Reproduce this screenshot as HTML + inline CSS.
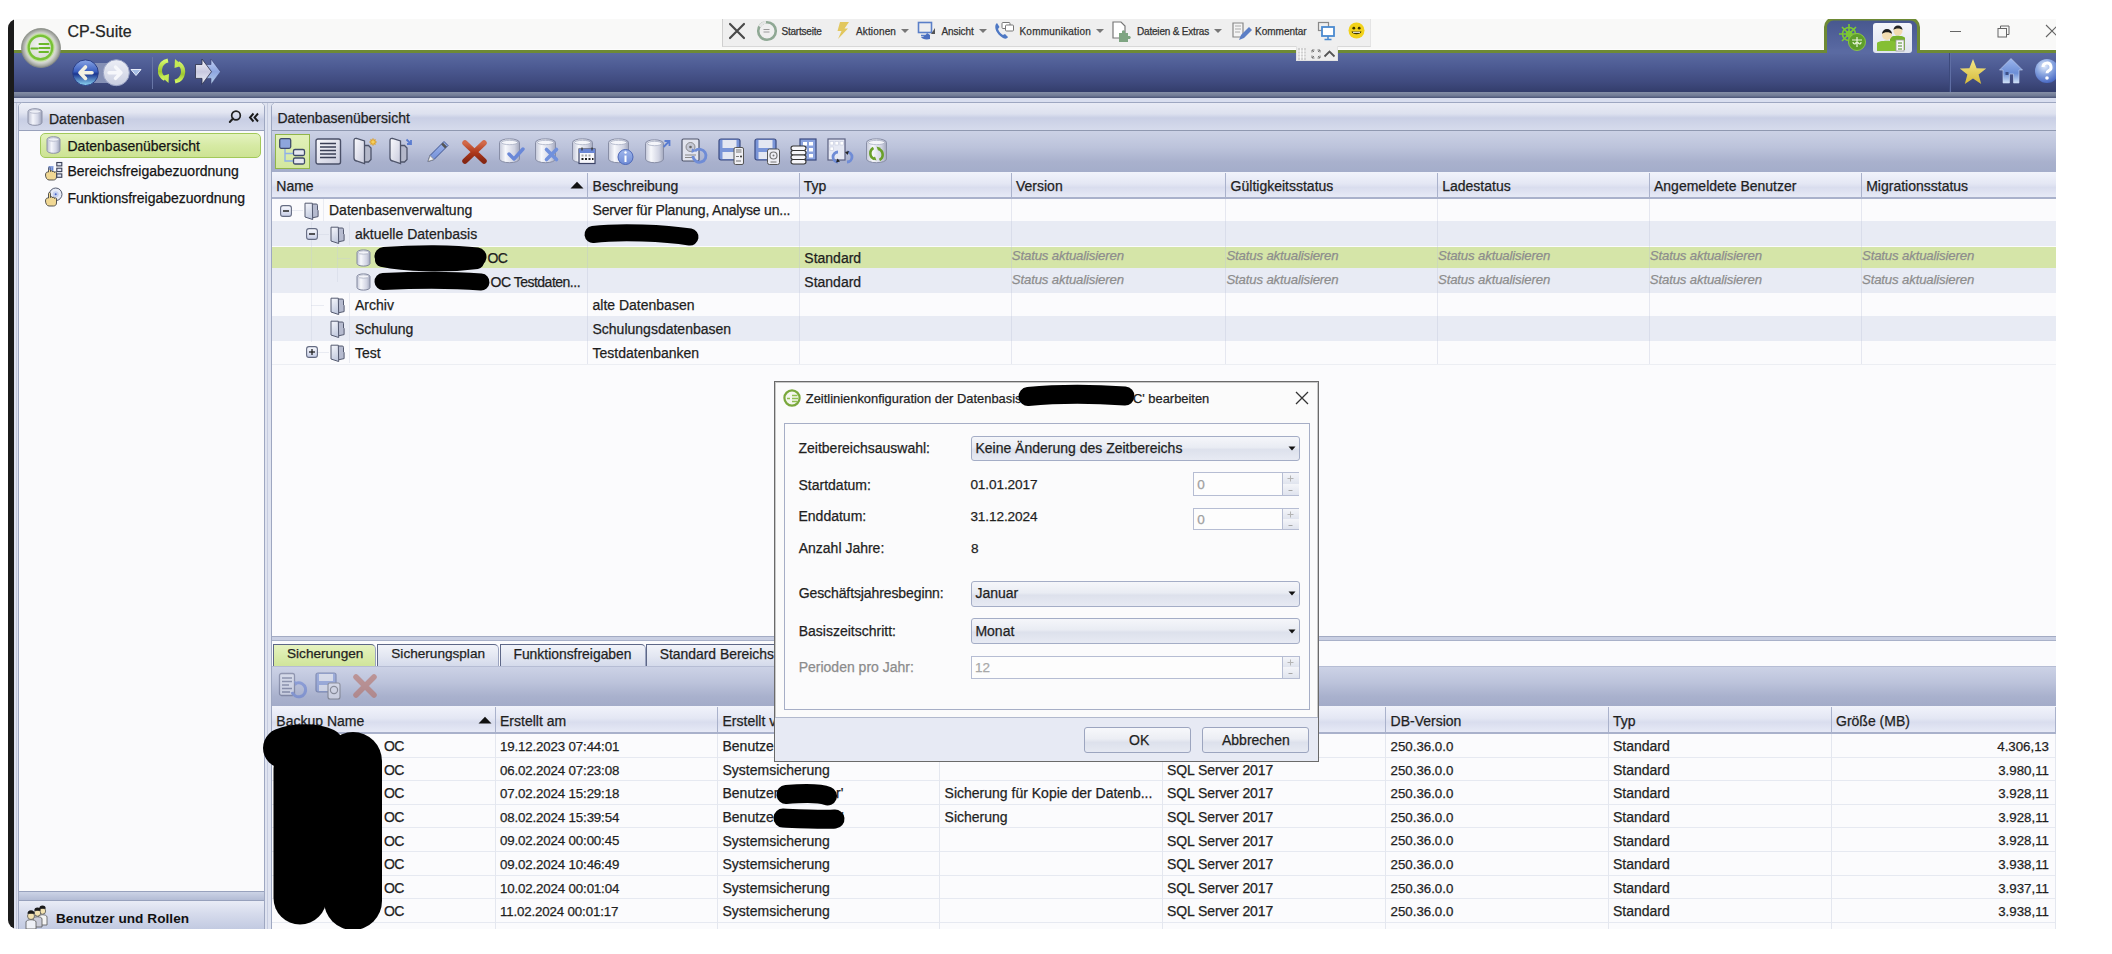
<!DOCTYPE html>
<html><head><meta charset="utf-8">
<style>
*{box-sizing:border-box;margin:0;padding:0}
html,body{width:2112px;height:954px;overflow:hidden;background:#fff;font-family:"Liberation Sans",sans-serif;color:#1e1e1e}
.a{position:absolute;display:block}
.t{position:absolute;white-space:nowrap;font-size:14px;line-height:16px;-webkit-text-stroke:0.25px currentColor}
#win{position:absolute;left:0;top:0;width:2056px;height:929px;overflow:hidden;clip-path:inset(19px 0 0 8px round 9px 0 0 9px)}
</style></head><body>
<div id="win">
<div class="a" style="left:8px;top:19px;width:6px;height:910px;background:#1b1b1b"></div>
<div class="a" style="left:14px;top:19px;width:2042px;height:31px;background:#f9f9f8"></div>
<div class="a" style="left:14px;top:49px;width:2042px;height:1px;background:#fdfdfd"></div>
<div class="a" style="left:14px;top:50px;width:2042px;height:3px;background:#6e8a35"></div>
<div class="a" style="left:14px;top:53px;width:2042px;height:39px;background:linear-gradient(#5a6aa1,#4d5b93 35%,#3f4a7e 75%,#333d6b)"></div>
<div class="a" style="left:14px;top:92px;width:2042px;height:6px;background:linear-gradient(#858fa7,#717b95 60%,#4b5578)"></div>
<div class="a" style="left:14px;top:98px;width:2042px;height:831px;background:#e1e5f2"></div>
<div class="a" style="left:14px;top:98px;width:2042px;height:4px;background:#d9deef"></div>
<div class="a" style="left:14px;top:102px;width:2042px;height:1px;background:#a4acc4"></div>
<svg class="a" style="left:20px;top:27px;" width="42" height="42" viewBox="0 0 42 42">
<defs>
<radialGradient id="lg1" cx="50%" cy="50%" r="50%"><stop offset="0.6" stop-color="#f0f1ee"/><stop offset="0.8" stop-color="#c9ccc6"/><stop offset="1" stop-color="#8c9089"/></radialGradient>
<radialGradient id="lg2" cx="45%" cy="40%" r="60%"><stop offset="0" stop-color="#f4f4f4"/><stop offset="1" stop-color="#d8dbd4"/></radialGradient>
</defs>
<circle cx="21" cy="21" r="19.5" fill="url(#lg1)" stroke="#8a8e87" stroke-width="0.8"/>
<circle cx="20.5" cy="20.5" r="13.5" fill="none" stroke="#c0e09a" stroke-width="1.5"/>
<circle cx="20.5" cy="20.5" r="11.8" fill="url(#lg2)" stroke="#78c236" stroke-width="2.4"/>
<path d="M11.5 21.5h6M19.5 17h9M19.5 21h10M19.5 25h8.5" stroke="#6ab82a" stroke-width="2.1" stroke-linecap="round"/>
</svg>
<div class="t" style="left:67.5px;top:21.96px;font-size:16px;line-height:19px;color:#252525;">CP-Suite</div>
<svg class="a" style="left:70px;top:58px;" width="75" height="30" viewBox="0 0 75 30">
<defs>
<linearGradient id="bk" x1="0" y1="0" x2="0" y2="1"><stop offset="0" stop-color="#8aa6e6"/><stop offset="0.45" stop-color="#3b5fc0"/><stop offset="0.55" stop-color="#1a3590"/><stop offset="1" stop-color="#8fd8f4"/></linearGradient>
<linearGradient id="fw" x1="0" y1="0" x2="0" y2="1"><stop offset="0" stop-color="#eceef6"/><stop offset="1" stop-color="#c9cee0"/></linearGradient>
</defs>
<rect x="22" y="5" width="30" height="20" fill="#8590b5"/>
<circle cx="46.3" cy="14.7" r="13" fill="url(#fw)" stroke="#9aa3c4" stroke-width="1"/>
<path d="M39 14.7h12M45.5 9l5.5 5.7-5.5 5.7" stroke="#f6f7fb" stroke-width="3.4" fill="none" stroke-linecap="round" stroke-linejoin="round"/>
<circle cx="15.5" cy="14.7" r="12.8" fill="url(#bk)" stroke="#2b3f86" stroke-width="1"/>
<path d="M22 14.7H10M15.5 9L10 14.7l5.5 5.7" stroke="#f2f0e2" stroke-width="3.6" fill="none" stroke-linecap="round" stroke-linejoin="round"/>
<path d="M61 11.5h10l-5 6z" fill="#a6bde4" stroke="#e8eefa" stroke-width="1"/>
</svg>
<div class="a" style="left:152px;top:57px;width:1px;height:32px;background:#6876a6"></div>
<svg class="a" style="left:158px;top:57px;" width="28" height="28" viewBox="0 0 28 28">
<defs><linearGradient id="rf" x1="0" y1="0" x2="0" y2="1"><stop offset="0" stop-color="#d6f86e"/><stop offset="0.6" stop-color="#9cc630"/><stop offset="1" stop-color="#d0f560"/></linearGradient></defs>
<path d="M10 3.5A10 10 0 0 0 7 22" stroke="url(#rf)" stroke-width="4.2" fill="none"/>
<path d="M3 19.5l7.5 6.5 0.5-9z" fill="#c4ea55"/>
<path d="M17 24.5A10 10 0 0 0 20 6" stroke="url(#rf)" stroke-width="4.2" fill="none"/>
<path d="M24.5 8.5l-7.5-6.5-0.5 9z" fill="#c4ea55"/>
</svg>
<svg class="a" style="left:194px;top:57px;" width="28" height="28" viewBox="0 0 28 28">
<defs><linearGradient id="da1" x1="0" y1="0" x2="0" y2="1"><stop offset="0" stop-color="#f6f6fb"/><stop offset="0.5" stop-color="#c8c9e0"/><stop offset="1" stop-color="#eef2fa"/></linearGradient>
<linearGradient id="da2" x1="0" y1="0" x2="0" y2="1"><stop offset="0" stop-color="#c2d0f4"/><stop offset="0.5" stop-color="#8ea6e0"/><stop offset="1" stop-color="#b8d2ee"/></linearGradient></defs>
<path d="M10.5 7.5H17V2l9.5 12.7L17 27.4v-6H10.5z" fill="url(#da2)" stroke="#3a4270" stroke-width="0.6"/>
<path d="M1.5 7.5H8V2l9.5 12.7L8 27.4v-6H1.5z" fill="url(#da1)" stroke="#2a2f48" stroke-width="0.8"/>
</svg>
<div class="a" style="left:722px;top:19px;width:649px;height:28px;background:#efefef;border-left:1px solid #cfcfcf;border-bottom:1px solid #d8d8d8;border-right:1px solid #e4e4e4"></div>
<div class="a" style="left:1296px;top:46px;width:42px;height:15px;background:#eeeeee;border:1px solid #e2e2e2;border-top:none"></div>
<svg class="a" style="left:728px;top:22px;" width="18" height="18" viewBox="0 0 18 18"><path d="M2 2L16 16M16 2L2 16" stroke="#4a4a4a" stroke-width="2.2" stroke-linecap="round"/></svg>
<svg class="a" style="left:756px;top:20px;" width="22" height="22" viewBox="0 0 22 22"><circle cx="11" cy="11" r="8.8" fill="none" stroke="#8fa894" stroke-width="2.6"/><path d="M3.5 6.5A9 9 0 0 1 10 2.2" stroke="#e6e6e6" stroke-width="2.8" fill="none"/><path d="M7.5 9.5h6M7.5 12h6" stroke="#9a9a9a" stroke-width="1"/></svg>
<div class="t" style="left:781.5px;top:25.74px;font-size:10px;line-height:12px;color:#333;letter-spacing:-0.22px;">Startseite</div>
<svg class="a" style="left:835px;top:21px;" width="15" height="19" viewBox="0 0 15 19"><path d="M5 1h9L9.5 7.5H13L3 18l3.5-8H2.5z" fill="#e2c75e"/></svg>
<div class="t" style="left:856px;top:25.74px;font-size:10px;line-height:12px;color:#333;letter-spacing:0.14px;">Aktionen</div>
<svg class="a" style="left:900px;top:28px;" width="10" height="6" viewBox="0 0 10 6"><path d="M1 1h8L5 5z" fill="#777"/></svg>
<svg class="a" style="left:917px;top:21px;" width="20" height="20" viewBox="0 0 20 20"><rect x="1.5" y="1.5" width="13" height="10" fill="none" stroke="#5a7fc8" stroke-width="1.6"/><path d="M4 14.5h8" stroke="#5a7fc8" stroke-width="1.6"/><path d="M13 18c-4 1-8 0-9-2 3 0 5-2 6-4l3 2z" fill="#4b6fbf"/><path d="M14 13l4-6v6z" fill="#555"/></svg>
<div class="t" style="left:941.5px;top:25.74px;font-size:10px;line-height:12px;color:#333;letter-spacing:-0.1px;">Ansicht</div>
<svg class="a" style="left:978px;top:28px;" width="10" height="6" viewBox="0 0 10 6"><path d="M1 1h8L5 5z" fill="#777"/></svg>
<svg class="a" style="left:993px;top:20px;" width="22" height="22" viewBox="0 0 22 22"><path d="M3 4c-2 3 0 10 7 14 2 1 4 1 5-1l-3-3-2 1c-2-1-4-3-5-6l1.5-2L4 3z" fill="#4e78c4"/><rect x="9" y="2.5" width="8" height="6" rx="1" fill="#fff" stroke="#777" stroke-width="1"/><rect x="12.5" y="5" width="8" height="6" rx="1" fill="#fff" stroke="#777" stroke-width="1"/></svg>
<div class="t" style="left:1019.5px;top:25.74px;font-size:10px;line-height:12px;color:#333;letter-spacing:0.2px;">Kommunikation</div>
<svg class="a" style="left:1095px;top:28px;" width="10" height="6" viewBox="0 0 10 6"><path d="M1 1h8L5 5z" fill="#777"/></svg>
<svg class="a" style="left:1111px;top:21px;" width="22" height="22" viewBox="0 0 22 22"><path d="M2 1h8l4 4v12H2z" fill="#fff" stroke="#777" stroke-width="1.2"/><path d="M8 12h3v-2a2 2 0 0 1 3 0v2h3v3h2a2 2 0 0 1 0 3h-2v3H8z" fill="#7fa582"/></svg>
<div class="t" style="left:1137px;top:25.74px;font-size:10px;line-height:12px;color:#333;letter-spacing:-0.19px;">Dateien &amp; Extras</div>
<svg class="a" style="left:1213px;top:28px;" width="10" height="6" viewBox="0 0 10 6"><path d="M1 1h8L5 5z" fill="#777"/></svg>
<svg class="a" style="left:1231px;top:21px;" width="21" height="21" viewBox="0 0 21 21"><path d="M2 2h10v14H2z" fill="#f4f4f4" stroke="#888" stroke-width="1.2"/><path d="M4 5h6M4 8h6M4 11h5" stroke="#aaa" stroke-width="1"/><path d="M8 19l2-5 8-8 3 3-8 8z" fill="#5c7fc6"/></svg>
<div class="t" style="left:1255px;top:25.74px;font-size:10px;line-height:12px;color:#333;letter-spacing:0px;">Kommentar</div>
<svg class="a" style="left:1317px;top:21px;" width="20" height="21" viewBox="0 0 20 21"><rect x="1.5" y="1.5" width="10" height="8" fill="none" stroke="#888" stroke-width="1.2"/><rect x="5" y="6" width="12" height="9" fill="#fff" stroke="#4a8ad0" stroke-width="1.8"/><path d="M11 15v3M7.5 18.5h7" stroke="#4a8ad0" stroke-width="1.6"/></svg>
<svg class="a" style="left:1348px;top:22px;" width="17" height="17" viewBox="0 0 17 17"><circle cx="8.5" cy="8.5" r="8" fill="#f2d21a"/><circle cx="5.8" cy="6.2" r="1.4" fill="#3b3300"/><circle cx="11.2" cy="6.2" r="1.4" fill="#3b3300"/><path d="M3.5 9.5c1 3.5 9 3.5 10 0z" fill="#3b3300"/><path d="M5 10.3h7" stroke="#fff" stroke-width="1"/></svg>
<svg class="a" style="left:1297px;top:47px;" width="40" height="14" viewBox="0 0 40 14"><g fill="#d2d2d2"><rect x="1" y="1" width="8" height="12"/></g><path d="M1 4h8M1 7h8M1 10h8M3.5 1v12M6.5 1v12" stroke="#fff" stroke-width="0.8"/><path d="M15 3l2 2M15 3h2.5M15 3v2.5M23 3l-2 2M23 3h-2.5M23 3v2.5M15 11l2-2M15 11h2.5M15 11v-2.5M23 11l-2-2M23 11h-2.5M23 11v-2.5" stroke="#777" stroke-width="1"/><path d="M27.5 9.5l5-5 5 5" stroke="#555" stroke-width="1.8" fill="none"/></svg>
<svg class="a" style="left:1822px;top:17px;" width="100" height="37" viewBox="0 0 100 37">
<defs><linearGradient id="tb" x1="0" y1="0" x2="0" y2="1"><stop offset="0" stop-color="#47578e"/><stop offset="1" stop-color="#5a6aa3"/></linearGradient></defs>
<path d="M0 34.5H3.5V10a8 8 0 0 1 8-8H88.5a8 8 0 0 1 8 8V34.5H100" fill="url(#tb)" stroke="#6e8a35" stroke-width="3"/>
</svg>
<div class="a" style="left:1827px;top:49px;width:90px;height:5px;background:#5a6aa2"></div>
<div class="a" style="left:1873px;top:23px;width:39px;height:30px;background:linear-gradient(#f4f5fa,#dfe3ef);border-radius:3px"></div>
<svg class="a" style="left:1838px;top:23px;" width="28" height="28" viewBox="0 0 28 28">
<g stroke="#7cc832" stroke-width="1.6" fill="none"><circle cx="11" cy="11" r="6.5"/><circle cx="11" cy="11" r="2.5"/>
<path d="M11 1v20M1 11h20M4 4l14 14M18 4L4 18"/></g>
<circle cx="19" cy="19" r="8.5" fill="#5e9e2a" stroke="#8bc448" stroke-width="1"/>
<path d="M14 17h10M19 14v10M15 19c0 2 3 3 3 0M20 19c0 2 3 3 3 0" stroke="#e8f4d8" stroke-width="1.2" fill="none"/>
</svg>
<svg class="a" style="left:1875px;top:24px;" width="34" height="28" viewBox="0 0 34 28">
<circle cx="23" cy="7" r="4.5" fill="#f2dcb0"/><path d="M18.5 6a4.5 4.5 0 0 1 9 0c-2-2-7-2-9 0z" fill="#222"/>
<path d="M15 14c1-3 14-3 15 0v12H15z" fill="#76b22c"/>
<circle cx="12" cy="11" r="5" fill="#f3ddb2"/><path d="M7 10a5 5 0 0 1 10 0c-2-2.5-8-2.5-10 0z" fill="#1d1d1d"/>
<path d="M2 19c1-3 19-3 20 0v8H2z" fill="#84bf34"/>
<rect x="21" y="16" width="8" height="11" fill="#f7f7f7" stroke="#999" stroke-width="0.8"/>
<path d="M23 19h4M23 22h4M23 25h4" stroke="#4b8a26" stroke-width="1"/>
</svg>
<div class="a" style="left:1950px;top:31px;width:11px;height:1.2px;background:#666"></div>
<svg class="a" style="left:1997px;top:25px;" width="13" height="13" viewBox="0 0 13 13"><rect x="1" y="3.5" width="8.5" height="8.5" fill="none" stroke="#666" stroke-width="1"/><path d="M3.5 3.5V1h8.5v8.5H9.5" fill="none" stroke="#666" stroke-width="1"/></svg>
<svg class="a" style="left:2045px;top:24px;" width="14" height="14" viewBox="0 0 14 14"><path d="M1 1L13 13M13 1L1 13" stroke="#666" stroke-width="1.1"/></svg>
<div class="a" style="left:1949px;top:53px;width:1px;height:39px;background:#3d4a7c;box-shadow:1px 0 0 #5f6ea4"></div>
<svg class="a" style="left:1959px;top:58px;" width="28" height="27" viewBox="0 0 28 27">
<defs><linearGradient id="st" x1="0" y1="0" x2="0" y2="1"><stop offset="0" stop-color="#f4e78a"/><stop offset="1" stop-color="#d6bb3a"/></linearGradient></defs>
<path d="M14 1l3.6 9.2 9.6 0.4-7.6 6 2.6 9.4L14 20.6 5.8 26l2.6-9.4-7.6-6 9.6-0.4z" fill="url(#st)"/>
</svg>
<svg class="a" style="left:1998px;top:57px;" width="26" height="27" viewBox="0 0 26 27">
<defs><linearGradient id="hs" x1="0" y1="0" x2="0" y2="1"><stop offset="0" stop-color="#9cb6ee"/><stop offset="0.6" stop-color="#6c8ed6"/><stop offset="1" stop-color="#cfe2f8"/></linearGradient></defs>
<path d="M13 1.5L24.5 13H21v13h-5.5v-9h-4v9H5V13H1.5z" fill="url(#hs)" stroke="#c9d6f2" stroke-width="0.6"/>
<rect x="7.5" y="15" width="3" height="3" fill="#3c4f86"/>
</svg>
<svg class="a" style="left:2034px;top:58px;" width="26" height="26" viewBox="0 0 26 26">
<defs><radialGradient id="hp" cx="40%" cy="30%" r="70%"><stop offset="0" stop-color="#e2ecfc"/><stop offset="0.5" stop-color="#8aa6e0"/><stop offset="1" stop-color="#4a6ac4"/></radialGradient></defs>
<circle cx="13" cy="13" r="12" fill="url(#hp)"/>
<path d="M9 9a4 4 0 1 1 5.5 3.8c-1 .5-1.5 1-1.5 2.5" stroke="#fff" stroke-width="3" fill="none"/><circle cx="13" cy="20" r="1.8" fill="#fff"/>
</svg>
<svg width="0" height="0" style="position:absolute"><defs><linearGradient id="cyl" x1="0" y1="0" x2="1" y2="0"><stop offset="0" stop-color="#b9bdd0"/><stop offset="0.35" stop-color="#f4f5fb"/><stop offset="0.7" stop-color="#d3d6e6"/><stop offset="1" stop-color="#9aa0b8"/></linearGradient></defs></svg>
<div class="a" style="left:14px;top:103px;width:4px;height:826px;background:#dde1ef"></div>
<div class="a" style="left:16px;top:103px;width:1px;height:826px;background:#c3c9dd"></div>
<div class="a" style="left:18px;top:102px;width:247px;height:830px;border:1px solid #9ea7c1;border-radius:5px 5px 0 0;background:#fafafc"></div>
<div class="a" style="left:19px;top:103px;width:245px;height:28px;border-radius:4px 4px 0 0;background:linear-gradient(#eef0f8,#e2e5f1 35%,#c8cee4 60%,#d3d8ea);border-bottom:1px solid #98a1bb"></div>
<svg class="a" style="left:27px;top:108px;" width="16" height="18" viewBox="0 0 16 18"><path d="M1 3.5A7.0 2.8 0 0 1 15 3.5V14.5A7.0 2.8 0 0 1 1 14.5z" fill="url(#cyl)" stroke="#8d92a8" stroke-width="1"/><ellipse cx="8.0" cy="3.5" rx="5.8" ry="1.8" fill="#eceef6" stroke="#a9aec2" stroke-width="0.7"/></svg>
<div class="t" style="left:49px;top:110.65px;font-size:14px;line-height:17px;color:#1f1f1f;">Datenbasen</div>
<svg class="a" style="left:227px;top:109px;" width="34" height="16" viewBox="0 0 34 16"><circle cx="9" cy="6.5" r="4.3" fill="none" stroke="#222" stroke-width="1.7"/><path d="M6 9.5L2.8 13" stroke="#222" stroke-width="2" stroke-linecap="round"/><path d="M26.5 4.5L23 8.5l3.5 4M31 4.5L27.5 8.5l3.5 4" stroke="#1a1a1a" stroke-width="1.9" fill="none"/></svg>
<div class="a" style="left:40px;top:133px;width:221px;height:25px;border:1px solid #a2c95a;border-radius:5px;background:linear-gradient(#e4f2c0,#d6eaa4 50%,#cde394)"></div>
<svg class="a" style="left:46px;top:136px;" width="15" height="18" viewBox="0 0 15 18"><path d="M1 3.5A6.5 2.8 0 0 1 14 3.5V14.5A6.5 2.8 0 0 1 1 14.5z" fill="url(#cyl)" stroke="#8d92a8" stroke-width="1"/><ellipse cx="7.5" cy="3.5" rx="5.3" ry="1.8" fill="#eceef6" stroke="#a9aec2" stroke-width="0.7"/></svg>
<div class="t" style="left:67.5px;top:138.15px;font-size:14px;line-height:17px;color:#141414;">Datenbasenübersicht</div>
<svg class="a" style="left:43px;top:161px;" width="22" height="20" viewBox="0 0 22 20"><path d="M9.5 6.5v6M12 17.5v-5" stroke="#7fa0e0" stroke-width="1" fill="none"/>
<path d="M2.5 14c0-2 1-3 2-3l1 0V7c0-1.3 2-1.3 2 0v3.5c0-1 2-1 2 0v0.5c0-1 2-1 2 0v0.5c0-.8 2-.8 2 0V16c0 2-1.5 3-3 3H6c-2 0-3.5-2.5-3.5-5z" fill="#f1d894" stroke="#444" stroke-width="0.9"/>
<rect x="5.5" y="5" width="5" height="4" fill="#5d7ed0" opacity="0.7"/>
<g fill="#dfe4f2" stroke="#3b4058" stroke-width="1.1"><rect x="13.8" y="1.5" width="5" height="3.4"/><rect x="13.8" y="7.2" width="5" height="3.4"/><rect x="13.8" y="12.9" width="5" height="3.4"/></g></svg>
<div class="t" style="left:67.5px;top:163.15px;font-size:14px;line-height:17px;color:#141414;">Bereichsfreigabezuordnung</div>
<svg class="a" style="left:43px;top:186px;" width="22" height="21" viewBox="0 0 22 21"><circle cx="12.7" cy="8.3" r="6.3" fill="#e6eaf6" stroke="#555c70" stroke-width="1"/><circle cx="12.7" cy="8.3" r="3" fill="#c5d0f0"/><circle cx="12.7" cy="8.3" r="1" fill="#4a66c8"/>
<path d="M2.5 15c0-2 1-3 2-3l1 0V7.5c0-1.3 2-1.3 2 0v4c0-1 2-1 2 0v0.5c0-1 2-1 2 0v0.5c0-.8 2-.8 2 0V17c0 2-1.5 3-3 3H6c-2 0-3.5-2.5-3.5-5z" fill="#f1d894" stroke="#444" stroke-width="0.9"/></svg>
<div class="t" style="left:67.5px;top:189.65px;font-size:14px;line-height:17px;color:#141414;">Funktionsfreigabezuordnung</div>
<div class="a" style="left:19px;top:891px;width:245px;height:10px;background:linear-gradient(#ccd3e6,#b3bcd5);border-top:1px solid #98a2bd;border-bottom:1px solid #97a1bc"></div>
<div class="a" style="left:19px;top:901px;width:245px;height:28px;background:linear-gradient(#e9ecf6,#d6dbec 45%,#c2cae1)"></div>
<svg class="a" style="left:23px;top:903px;" width="28" height="27" viewBox="0 0 28 27"><g stroke="#555" stroke-width="0.8">
<path d="M15 14c0-3 9-3 9 0v8h-9z" fill="#f4f4f4"/><circle cx="19.5" cy="8" r="3.2" fill="#f3e2b0"/>
<path d="M10 16c0-3 9-3 9 0v8h-9z" fill="#c9cbd8"/><circle cx="14.5" cy="10" r="3.2" fill="#f3e2b0"/>
<path d="M3 19c0-3 10-3 10 0v7H3z" fill="#eef0f6"/><circle cx="8" cy="13" r="3.5" fill="#f3e2b0"/></g>
<path d="M16.3 5.7a3.2 3.2 0 0 1 6.4 0zM11.3 7.7a3.2 3.2 0 0 1 6.4 0zM4.5 10.7a3.5 3.5 0 0 1 7 0z" fill="#1a1a1a"/></svg>
<div class="t" style="left:56px;top:910.69px;font-size:13.6px;line-height:16px;color:#101010;-webkit-text-stroke:0;font-weight:bold;letter-spacing:0.05px;">Benutzer und Rollen</div>
<div class="a" style="left:265px;top:103px;width:6px;height:826px;background:#dfe3f0"></div>
<div class="a" style="left:267px;top:103px;width:1px;height:826px;background:#c6cce0"></div>
<div class="a" style="left:271px;top:102px;width:1790px;height:830px;border:1px solid #9ea7c1;border-radius:5px 0 0 0;background:#fbfbfd"></div>
<div class="a" style="left:272px;top:103px;width:1784px;height:28px;border-radius:4px 0 0 0;background:linear-gradient(#e9ebf5,#dde1ef 40%,#c9cfe5 55%,#d6dbec);border-bottom:1px solid #8f98b0"></div>
<div class="t" style="left:277.5px;top:110.15px;font-size:14px;line-height:17px;color:#1f1f1f;">Datenbasenübersicht</div>
<div class="a" style="left:272px;top:131px;width:1784px;height:41px;background:linear-gradient(#cbd1e5,#bcc3db 40%,#a9b1cd 75%,#a4adca)"></div>
<div class="a" style="left:274.5px;top:134px;width:35px;height:35px;background:linear-gradient(#e2f0bb,#d3e79e);border:1px solid #90b44a"></div>
<svg width="0" height="0" style="position:absolute"><defs>
<linearGradient id="pg" x1="0" y1="0" x2="1" y2="1"><stop offset="0" stop-color="#fbfbfe"/><stop offset="1" stop-color="#c8cadc"/></linearGradient>
<linearGradient id="cy2" x1="0" y1="0" x2="1" y2="0"><stop offset="0" stop-color="#c3c7d8"/><stop offset="0.3" stop-color="#f7f8fc"/><stop offset="0.75" stop-color="#d0d3e2"/><stop offset="1" stop-color="#a3a8bd"/></linearGradient>
<linearGradient id="rx" x1="0" y1="0" x2="0" y2="1"><stop offset="0" stop-color="#d26a4a"/><stop offset="0.5" stop-color="#b03a1c"/><stop offset="1" stop-color="#862612"/></linearGradient>
<linearGradient id="bl" x1="0" y1="0" x2="0" y2="1"><stop offset="0" stop-color="#9fb6ec"/><stop offset="1" stop-color="#6f8cd6"/></linearGradient>
</defs></svg>
<svg class="a" style="left:279px;top:138px;" width="28" height="28" viewBox="0 0 28 28"><path d="M6 10v13h9M6 15.5h9" stroke="#8fb0e8" stroke-width="1.4" fill="none"/><rect x="0.7" y="0.7" width="11" height="9.6" rx="1.5" fill="#8ea6dc" stroke="#3f4a6a" stroke-width="1.3"/><rect x="14.5" y="11.5" width="11" height="6" rx="1.5" fill="#e6e8f2" stroke="#3f4a6a" stroke-width="1.3"/><rect x="14.5" y="20" width="11" height="6" rx="1.5" fill="#e6e8f2" stroke="#3f4a6a" stroke-width="1.3"/></svg>
<svg class="a" style="left:315px;top:138px;" width="28" height="28" viewBox="0 0 28 28"><rect x="1" y="1" width="24.5" height="25" rx="2" fill="url(#pg)" stroke="#4a5068" stroke-width="1.4"/><path d="M5 5.5h16M5 9h16M5 12.5h16M5 16h16M5 19.5h16" stroke="#3a3f55" stroke-width="1.6"/></svg>
<svg class="a" style="left:352px;top:137px;" width="28" height="28" viewBox="0 0 28 28"><path d="M12 8.5h4.5l2.5 2.5v11.5l-2.5 2.5H12z" fill="#b4b8ca" stroke="#4e546a" stroke-width="1.3"/><path d="M2 3.5Q2 1 4.5 1.5L12.5 4V26.5L4.5 24Q2 23.5 2 21z" fill="url(#pg)" stroke="#4e546a" stroke-width="1.3"/><g stroke="#e0a020" stroke-width="1.4"><path d="M17.5 5h7M21 1.5v7M18.5 2.5l5 5M23.5 2.5l-5 5"/></g><circle cx="21" cy="5" r="1.8" fill="#f4d060"/></svg>
<svg class="a" style="left:388px;top:137px;" width="28" height="28" viewBox="0 0 28 28"><path d="M12 8.5h4.5l2.5 2.5v11.5l-2.5 2.5H12z" fill="#b4b8ca" stroke="#4e546a" stroke-width="1.3"/><path d="M2 3.5Q2 1 4.5 1.5L12.5 4V26.5L4.5 24Q2 23.5 2 21z" fill="url(#pg)" stroke="#4e546a" stroke-width="1.3"/><path d="M18.5 2.5l4.5 4.5M23 3v4h-4" stroke="#5a7cd0" stroke-width="1.8" fill="none"/></svg>
<svg class="a" style="left:425px;top:138px;" width="28" height="28" viewBox="0 0 28 28"><path d="M3 23.5l2-6 14-14 4 4-14 14z" fill="url(#bl)" stroke="#3f5490" stroke-width="1"/><path d="M17 5.5l4 4" stroke="#555" stroke-width="2.5"/><path d="M3 23.5l2-6 4 4z" fill="#f0f0f0" stroke="#888" stroke-width="0.8"/></svg>
<svg class="a" style="left:461px;top:139px;" width="28" height="26" viewBox="0 0 28 26"><path d="M4 4L23 22M23 4L4 22" stroke="url(#rx)" stroke-width="5.5" stroke-linecap="round"/></svg>
<svg class="a" style="left:498px;top:138px;" width="31" height="29" viewBox="0 0 31 29"><path d="M1.5 4.5A9.5 3.5 0 0 1 21.5 4.5V21A9.5 3.5 0 0 1 1.5 21z" fill="url(#cy2)" stroke="#888ea6" stroke-width="1"/><ellipse cx="11.5" cy="4.5" rx="8.0" ry="2.2" fill="#f4f5fa" stroke="#aab0c4" stroke-width="0.8"/><path d="M11 16l5 5 9-10" stroke="#6a88d8" stroke-width="3.4" fill="none" stroke-linecap="round" stroke-linejoin="round"/></svg>
<svg class="a" style="left:534px;top:138px;" width="31" height="29" viewBox="0 0 31 29"><path d="M1.5 4.5A9.5 3.5 0 0 1 21.5 4.5V21A9.5 3.5 0 0 1 1.5 21z" fill="url(#cy2)" stroke="#888ea6" stroke-width="1"/><ellipse cx="11.5" cy="4.5" rx="8.0" ry="2.2" fill="#f4f5fa" stroke="#aab0c4" stroke-width="0.8"/><path d="M12.5 11.5l10 10M22.5 11.5l-10 10" stroke="#7090dc" stroke-width="3.6" stroke-linecap="round"/></svg>
<svg class="a" style="left:571px;top:138px;" width="31" height="29" viewBox="0 0 31 29"><path d="M1.5 4.5A9.5 3.5 0 0 1 21.5 4.5V21A9.5 3.5 0 0 1 1.5 21z" fill="url(#cy2)" stroke="#888ea6" stroke-width="1"/><ellipse cx="11.5" cy="4.5" rx="8.0" ry="2.2" fill="#f4f5fa" stroke="#aab0c4" stroke-width="0.8"/><rect x="8" y="11" width="16" height="14.5" fill="#f7f7fb" stroke="#3c4466" stroke-width="1.2"/><rect x="8" y="11" width="16" height="4" fill="#6a86d4"/><path d="M11 9.5v3M21 9.5v3" stroke="#333" stroke-width="1.2"/><g fill="#222"><rect x="10.5" y="20" width="2" height="2"/><rect x="14" y="20" width="2" height="2"/><rect x="17.5" y="20" width="2" height="2"/><rect x="21" y="20" width="1.5" height="2"/></g><g fill="#aaa"><rect x="10.5" y="16.5" width="2" height="2"/><rect x="14" y="16.5" width="2" height="2"/><rect x="17.5" y="16.5" width="2" height="2"/></g></svg>
<svg class="a" style="left:607px;top:138px;" width="31" height="29" viewBox="0 0 31 29"><path d="M1.5 4.5A9.5 3.5 0 0 1 21.5 4.5V21A9.5 3.5 0 0 1 1.5 21z" fill="url(#cy2)" stroke="#888ea6" stroke-width="1"/><ellipse cx="11.5" cy="4.5" rx="8.0" ry="2.2" fill="#f4f5fa" stroke="#aab0c4" stroke-width="0.8"/><circle cx="18.5" cy="19" r="7.5" fill="url(#bl)" stroke="#4d68b8" stroke-width="1"/><path d="M18.5 17.5v6.5" stroke="#fff" stroke-width="2"/><circle cx="18.5" cy="14.5" r="1.2" fill="#fff"/></svg>
<svg class="a" style="left:644px;top:139px;" width="29" height="28" viewBox="0 0 29 28"><path d="M1.5 4.5A8.5 3.5 0 0 1 19.5 4.5V20A8.5 3.5 0 0 1 1.5 20z" fill="url(#cy2)" stroke="#888ea6" stroke-width="1"/><ellipse cx="10.5" cy="4.5" rx="7.0" ry="2.2" fill="#f4f5fa" stroke="#aab0c4" stroke-width="0.8"/><path d="M19.5 8l6-6M20.5 2h5v5" stroke="#5a7cd0" stroke-width="1.8" fill="none"/></svg>
<svg class="a" style="left:681px;top:138px;" width="28" height="28" viewBox="0 0 28 28"><rect x="1" y="1" width="17" height="22" rx="1.5" fill="#e2e4ee" stroke="#4e546a" stroke-width="1.2"/><circle cx="9.5" cy="9" r="4.5" fill="#c6c9d6" stroke="#777" stroke-width="0.8"/><circle cx="9.5" cy="9" r="1.3" fill="#666"/><path d="M4 17h11M4 19.5h8" stroke="#888" stroke-width="1"/><path d="M14 13a6.5 6.5 0 1 1-2 5" stroke="#6f8cd6" stroke-width="2.8" fill="none"/><path d="M11 10.5l4 2.5-4.5 2z" fill="#6f8cd6"/></svg>
<svg class="a" style="left:718px;top:138px;" width="28" height="28" viewBox="0 0 28 28"><rect x="1" y="1" width="21" height="21" rx="2" fill="#7a95d8" stroke="#3a4a80" stroke-width="1.2"/><rect x="4.5" y="2" width="14" height="8" fill="#e4e7f2"/><rect x="4.5" y="14" width="14" height="7" fill="#e4e7f2"/><rect x="16" y="9.5" width="9.5" height="17" rx="1.5" fill="#f0f0f4" stroke="#555" stroke-width="1"/><path d="M18 12h5.5M18 14h5.5M18 18.5h3M18 23h5" stroke="#777" stroke-width="1"/><circle cx="23" cy="18.5" r="0.9" fill="#222"/></svg>
<svg class="a" style="left:754px;top:138px;" width="28" height="28" viewBox="0 0 28 28"><rect x="1" y="1" width="21" height="21" rx="2" fill="#7a95d8" stroke="#3a4a80" stroke-width="1.2"/><rect x="4.5" y="2" width="14" height="8" fill="#e4e7f2"/><rect x="4.5" y="14" width="14" height="7" fill="#e4e7f2"/><rect x="13.5" y="11" width="12" height="15.5" rx="2" fill="#eeeef4" stroke="#555" stroke-width="1"/><circle cx="19.5" cy="17.5" r="3.5" fill="none" stroke="#777" stroke-width="1.2"/><circle cx="19.5" cy="17.5" r="1" fill="#777"/><path d="M16.5 24h6" stroke="#777" stroke-width="1"/></svg>
<svg class="a" style="left:790px;top:138px;" width="28" height="28" viewBox="0 0 28 28"><rect x="10" y="1" width="16" height="21" fill="#8aa2de" stroke="#3a4a80" stroke-width="1.2"/><g fill="#fff"><rect x="13" y="4" width="4" height="3.5"/><rect x="19" y="4" width="4" height="3.5"/><rect x="13" y="10" width="4" height="3.5"/><rect x="19" y="10" width="4" height="3.5"/><rect x="19" y="16" width="4" height="3.5"/></g><g fill="#f6f6fa" stroke="#333" stroke-width="1.1"><rect x="1" y="8" width="15" height="4.5" rx="2.2"/><rect x="1" y="12.5" width="15" height="4.5" rx="2.2"/><rect x="1" y="17" width="15" height="4.5" rx="2.2"/><rect x="1" y="21.5" width="15" height="4.5" rx="2.2"/></g></svg>
<svg class="a" style="left:827px;top:138px;" width="28" height="28" viewBox="0 0 28 28"><rect x="1" y="1" width="17" height="21" fill="#e6e9f4" stroke="#5a6080" stroke-width="1.2"/><g fill="#fff" stroke="#c4c9dc" stroke-width="0.6"><rect x="3" y="3.5" width="3.5" height="3.5"/><rect x="8" y="3.5" width="3.5" height="3.5"/><rect x="13" y="3.5" width="3.5" height="3.5"/><rect x="3" y="9" width="3.5" height="3.5"/></g><path d="M11 14a5 5 0 0 0 0 10" stroke="#6f8cd6" stroke-width="2.8" fill="none"/><path d="M20 14a5 5 0 0 1 0 10" stroke="#6f8cd6" stroke-width="2.8" fill="none"/><path d="M9 24.5l4-1-2.5-3z" fill="#222"/><path d="M22 13l-4 1 2.5 3z" fill="#222"/></svg>
<svg class="a" style="left:865px;top:138px;" width="31" height="29" viewBox="0 0 31 29"><path d="M1.5 4.5A9.5 3.5 0 0 1 21.5 4.5V21A9.5 3.5 0 0 1 1.5 21z" fill="url(#cy2)" stroke="#888ea6" stroke-width="1"/><ellipse cx="11.5" cy="4.5" rx="8.0" ry="2.2" fill="#f4f5fa" stroke="#aab0c4" stroke-width="0.8"/><path d="M8.5 10a6 6 0 0 0 1 11" stroke="#6aa02a" stroke-width="2.6" fill="none"/><path d="M14.5 22a6 6 0 0 0-1-11" stroke="#6aa02a" stroke-width="2.6" fill="none"/><path d="M7 21l4.5 1.5-1.5-4z" fill="#6aa02a"/><path d="M16 10l-4.5-1.5 1.5 4z" fill="#6aa02a"/></svg>
<div class="a" style="left:272px;top:172px;width:1784px;height:26px;background:linear-gradient(#f1f3fb,#e4e7f4 45%,#d9ddee 60%,#e8ebf7)"></div>
<div class="a" style="left:272px;top:197px;width:1784px;height:2px;background:#a9b1cb"></div>
<div class="a" style="left:587px;top:173px;width:1px;height:24px;background:#aab2cc"></div>
<div class="a" style="left:799px;top:173px;width:1px;height:24px;background:#aab2cc"></div>
<div class="a" style="left:1011px;top:173px;width:1px;height:24px;background:#aab2cc"></div>
<div class="a" style="left:1225px;top:173px;width:1px;height:24px;background:#aab2cc"></div>
<div class="a" style="left:1437px;top:173px;width:1px;height:24px;background:#aab2cc"></div>
<div class="a" style="left:1649px;top:173px;width:1px;height:24px;background:#aab2cc"></div>
<div class="a" style="left:1861px;top:173px;width:1px;height:24px;background:#aab2cc"></div>
<div class="t" style="left:276.3px;top:177.85px;font-size:14px;line-height:17px;color:#1f1f1f;">Name</div>
<div class="t" style="left:592.6px;top:177.85px;font-size:14px;line-height:17px;color:#1f1f1f;">Beschreibung</div>
<div class="t" style="left:803.8000000000001px;top:177.85px;font-size:14px;line-height:17px;color:#1f1f1f;">Typ</div>
<div class="t" style="left:1016.0px;top:177.85px;font-size:14px;line-height:17px;color:#1f1f1f;">Version</div>
<div class="t" style="left:1230.6000000000001px;top:177.85px;font-size:14px;line-height:17px;color:#1f1f1f;">Gültigkeitsstatus</div>
<div class="t" style="left:1442.2px;top:177.85px;font-size:14px;line-height:17px;color:#1f1f1f;">Ladestatus</div>
<div class="t" style="left:1654.0px;top:177.85px;font-size:14px;line-height:17px;color:#1f1f1f;">Angemeldete Benutzer</div>
<div class="t" style="left:1866.2px;top:177.85px;font-size:14px;line-height:17px;color:#1f1f1f;">Migrationsstatus</div>
<svg class="a" style="left:570px;top:181px;" width="14" height="8" viewBox="0 0 14 8"><path d="M0.5 7.5L7 0.8l6.5 6.7z" fill="#111"/></svg>
<div class="a" style="left:272px;top:199px;width:1784px;height:22.400000000000006px;background:#fbfbfd"></div>
<div class="a" style="left:272px;top:221.4px;width:1784px;height:25.099999999999994px;background:#e8ebf4"></div>
<div class="a" style="left:272px;top:246.5px;width:1784px;height:21.899999999999977px;background:#d5e5a8"></div>
<div class="a" style="left:272px;top:268.4px;width:1784px;height:24.600000000000023px;background:#e8ebf4"></div>
<div class="a" style="left:272px;top:293px;width:1784px;height:23px;background:#fbfbfd"></div>
<div class="a" style="left:272px;top:316px;width:1784px;height:24.5px;background:#e8ebf4"></div>
<div class="a" style="left:272px;top:340.5px;width:1784px;height:22.399999999999977px;background:#fbfbfd"></div>
<div class="a" style="left:587px;top:199px;width:1px;height:165px;background:rgba(190,196,214,0.35)"></div>
<div class="a" style="left:799px;top:199px;width:1px;height:165px;background:rgba(190,196,214,0.35)"></div>
<div class="a" style="left:1011px;top:199px;width:1px;height:165px;background:rgba(190,196,214,0.35)"></div>
<div class="a" style="left:1225px;top:199px;width:1px;height:165px;background:rgba(190,196,214,0.35)"></div>
<div class="a" style="left:1437px;top:199px;width:1px;height:165px;background:rgba(190,196,214,0.35)"></div>
<div class="a" style="left:1649px;top:199px;width:1px;height:165px;background:rgba(190,196,214,0.35)"></div>
<div class="a" style="left:1861px;top:199px;width:1px;height:165px;background:rgba(190,196,214,0.35)"></div>
<div class="a" style="left:272px;top:364px;width:1784px;height:1px;background:#eceef3"></div>
<div class="a" style="left:311px;top:222px;width:1px;height:120px;background:rgba(200,205,220,0.35)"></div>
<div class="a" style="left:337px;top:246px;width:1px;height:36px;background:rgba(200,205,220,0.35)"></div>
<div class="a" style="left:337px;top:258px;width:13px;height:1px;background:rgba(200,205,220,0.35)"></div>
<div class="a" style="left:311px;top:305px;width:13px;height:1px;background:rgba(200,205,220,0.35)"></div>
<div class="a" style="left:292px;top:210px;width:11px;height:1px;background:rgba(200,205,220,0.35)"></div>
<div class="a" style="left:318px;top:234px;width:11px;height:1px;background:rgba(200,205,220,0.35)"></div>
<div class="a" style="left:318px;top:352px;width:11px;height:1px;background:rgba(200,205,220,0.35)"></div>
<div class="a" style="left:323px;top:199px;width:1px;height:22px;background:rgba(200,205,220,0.35)"></div>
<div class="a" style="left:349px;top:293px;width:1px;height:70px;background:rgba(200,205,220,0.35)"></div>
<div class="a" style="left:349px;top:222px;width:1px;height:23px;background:rgba(200,205,220,0.35)"></div>
<svg width="0" height="0" style="position:absolute"><defs><linearGradient id="tfg" x1="0" y1="0" x2="0.3" y2="1"><stop offset="0" stop-color="#f6f7fc"/><stop offset="1" stop-color="#c4cce0"/></linearGradient><linearGradient id="pm" x1="0" y1="0" x2="0" y2="1"><stop offset="0" stop-color="#fafbff"/><stop offset="1" stop-color="#c6cde6"/></linearGradient></defs></svg>
<svg class="a" style="left:280px;top:204.5px;" width="12" height="12" viewBox="0 0 12 12"><rect x="0.6" y="0.6" width="10.8" height="10.8" rx="2.4" fill="url(#pm)" stroke="#646b82" stroke-width="1.1"/><path d="M3 6h6" stroke="#222" stroke-width="1.3"/></svg>
<svg class="a" style="left:304px;top:201.5px;" width="16" height="19" viewBox="0 0 16 19"><path d="M8 2h4.2a1.3 1.3 0 0 1 1.3 1.3V8l0.6 0.6v6L8.5 15.8z" fill="#b6bbcf" stroke="#545a70" stroke-width="1"/><path d="M1 1.2h7.3l0.4 16.3L1 15z" fill="url(#tfg)" stroke="#545a70" stroke-width="1"/></svg>
<div class="t" style="left:329px;top:202.35px;font-size:14px;line-height:17px;color:#1e1e1e;">Datenbasenverwaltung</div>
<div class="t" style="left:592.5px;top:202.35px;font-size:14px;line-height:17px;color:#1e1e1e;letter-spacing:-0.21px;">Server für Planung, Analyse un...</div>
<svg class="a" style="left:306px;top:228.3px;" width="12" height="12" viewBox="0 0 12 12"><rect x="0.6" y="0.6" width="10.8" height="10.8" rx="2.4" fill="url(#pm)" stroke="#646b82" stroke-width="1.1"/><path d="M3 6h6" stroke="#222" stroke-width="1.3"/></svg>
<svg class="a" style="left:330px;top:225.5px;" width="16" height="19" viewBox="0 0 16 19"><path d="M8 2h4.2a1.3 1.3 0 0 1 1.3 1.3V8l0.6 0.6v6L8.5 15.8z" fill="#b6bbcf" stroke="#545a70" stroke-width="1"/><path d="M1 1.2h7.3l0.4 16.3L1 15z" fill="url(#tfg)" stroke="#545a70" stroke-width="1"/></svg>
<div class="t" style="left:355px;top:226.10px;font-size:14px;line-height:17px;color:#1e1e1e;">aktuelle Datenbasis</div>
<svg class="a" style="left:355.5px;top:249px;" width="16" height="18" viewBox="0 0 16 18"><path d="M1 3.5A6.5 2.6 0 0 1 14 3.5V14.5A6.5 2.6 0 0 1 1 14.5z" fill="url(#cy2)" stroke="#82889e" stroke-width="1"/><ellipse cx="7.5" cy="3.5" rx="5.3" ry="1.7" fill="#f2f3f8" stroke="#a4a9bc" stroke-width="0.7"/></svg>
<div class="t" style="left:487.5px;top:249.85px;font-size:14px;line-height:17px;color:#1e1e1e;letter-spacing:-0.6px;">OC</div>
<div class="t" style="left:804.3px;top:249.85px;font-size:14px;line-height:17px;color:#1e1e1e;">Standard</div>
<svg class="a" style="left:355.5px;top:273px;" width="16" height="18" viewBox="0 0 16 18"><path d="M1 3.5A6.5 2.6 0 0 1 14 3.5V14.5A6.5 2.6 0 0 1 1 14.5z" fill="url(#cy2)" stroke="#82889e" stroke-width="1"/><ellipse cx="7.5" cy="3.5" rx="5.3" ry="1.7" fill="#f2f3f8" stroke="#a4a9bc" stroke-width="0.7"/></svg>
<div class="t" style="left:490.5px;top:273.60px;font-size:14px;line-height:17px;color:#1e1e1e;letter-spacing:-0.5px;">OC Testdaten...</div>
<div class="t" style="left:804.3px;top:273.60px;font-size:14px;line-height:17px;color:#1e1e1e;">Standard</div>
<div class="t" style="left:1011.8px;top:248.33px;font-size:13.2px;line-height:16px;color:#8d8d8d;font-style:italic;letter-spacing:-0.15px;">Status aktualisieren</div>
<div class="t" style="left:1226.4px;top:248.33px;font-size:13.2px;line-height:16px;color:#8d8d8d;font-style:italic;letter-spacing:-0.15px;">Status aktualisieren</div>
<div class="t" style="left:1438px;top:248.33px;font-size:13.2px;line-height:16px;color:#8d8d8d;font-style:italic;letter-spacing:-0.15px;">Status aktualisieren</div>
<div class="t" style="left:1649.8px;top:248.33px;font-size:13.2px;line-height:16px;color:#8d8d8d;font-style:italic;letter-spacing:-0.15px;">Status aktualisieren</div>
<div class="t" style="left:1862px;top:248.33px;font-size:13.2px;line-height:16px;color:#8d8d8d;font-style:italic;letter-spacing:-0.15px;">Status aktualisieren</div>
<div class="t" style="left:1011.8px;top:272.08px;font-size:13.2px;line-height:16px;color:#8d8d8d;font-style:italic;letter-spacing:-0.15px;">Status aktualisieren</div>
<div class="t" style="left:1226.4px;top:272.08px;font-size:13.2px;line-height:16px;color:#8d8d8d;font-style:italic;letter-spacing:-0.15px;">Status aktualisieren</div>
<div class="t" style="left:1438px;top:272.08px;font-size:13.2px;line-height:16px;color:#8d8d8d;font-style:italic;letter-spacing:-0.15px;">Status aktualisieren</div>
<div class="t" style="left:1649.8px;top:272.08px;font-size:13.2px;line-height:16px;color:#8d8d8d;font-style:italic;letter-spacing:-0.15px;">Status aktualisieren</div>
<div class="t" style="left:1862px;top:272.08px;font-size:13.2px;line-height:16px;color:#8d8d8d;font-style:italic;letter-spacing:-0.15px;">Status aktualisieren</div>
<svg class="a" style="left:330px;top:296.5px;" width="16" height="19" viewBox="0 0 16 19"><path d="M8 2h4.2a1.3 1.3 0 0 1 1.3 1.3V8l0.6 0.6v6L8.5 15.8z" fill="#b6bbcf" stroke="#545a70" stroke-width="1"/><path d="M1 1.2h7.3l0.4 16.3L1 15z" fill="url(#tfg)" stroke="#545a70" stroke-width="1"/></svg>
<div class="t" style="left:355px;top:297.35px;font-size:14px;line-height:17px;color:#1e1e1e;">Archiv</div>
<div class="t" style="left:592.5px;top:297.35px;font-size:14px;line-height:17px;color:#1e1e1e;">alte Datenbasen</div>
<svg class="a" style="left:330px;top:320px;" width="16" height="19" viewBox="0 0 16 19"><path d="M8 2h4.2a1.3 1.3 0 0 1 1.3 1.3V8l0.6 0.6v6L8.5 15.8z" fill="#b6bbcf" stroke="#545a70" stroke-width="1"/><path d="M1 1.2h7.3l0.4 16.3L1 15z" fill="url(#tfg)" stroke="#545a70" stroke-width="1"/></svg>
<div class="t" style="left:355px;top:321.10px;font-size:14px;line-height:17px;color:#1e1e1e;">Schulung</div>
<div class="t" style="left:592.5px;top:321.10px;font-size:14px;line-height:17px;color:#1e1e1e;">Schulungsdatenbasen</div>
<svg class="a" style="left:306px;top:346px;" width="12" height="12" viewBox="0 0 12 12"><rect x="0.6" y="0.6" width="10.8" height="10.8" rx="2.4" fill="url(#pm)" stroke="#646b82" stroke-width="1.1"/><path d="M3 6h6" stroke="#222" stroke-width="1.3"/><path d="M6 3v6" stroke="#222" stroke-width="1.3"/></svg>
<svg class="a" style="left:330px;top:344px;" width="16" height="19" viewBox="0 0 16 19"><path d="M8 2h4.2a1.3 1.3 0 0 1 1.3 1.3V8l0.6 0.6v6L8.5 15.8z" fill="#b6bbcf" stroke="#545a70" stroke-width="1"/><path d="M1 1.2h7.3l0.4 16.3L1 15z" fill="url(#tfg)" stroke="#545a70" stroke-width="1"/></svg>
<div class="t" style="left:355px;top:344.85px;font-size:14px;line-height:17px;color:#1e1e1e;">Test</div>
<div class="t" style="left:592.5px;top:344.85px;font-size:14px;line-height:17px;color:#1e1e1e;">Testdatenbanken</div>
<svg class="a" style="left:580px;top:220px;" width="128" height="32" viewBox="0 0 128 32"><path d="M13 14.5C40 11 85 13 110 17" stroke="#000" stroke-width="17" stroke-linecap="round" fill="none"/></svg>
<svg class="a" style="left:365px;top:238px;" width="135" height="60" viewBox="0 0 135 60"><path d="M19 18.5C50 16 90 16 112 19" stroke="#000" stroke-width="19" stroke-linecap="round" fill="none"/><path d="M17 22C40 27 80 28 112 24" stroke="#000" stroke-width="14" stroke-linecap="round" fill="none"/><path d="M18 43.5C50 42 90 42 116 44" stroke="#000" stroke-width="17" stroke-linecap="round" fill="none"/></svg>
<div class="a" style="left:272px;top:636px;width:1784px;height:5px;background:#c9cfe3;border-top:1px solid #a3abc3;border-bottom:1px solid #a9b1c9"></div>
<div class="a" style="left:272px;top:641px;width:1784px;height:25px;background:#fbfbfd"></div>
<div class="a" style="left:273.2px;top:643.5px;width:103.30000000000001px;height:23px;background:linear-gradient(#e6f2c0,#d9ebaa 55%,#cfe499);border:1px solid #5d6787;border-bottom:none;border-right-color:#9aa3bf;border-radius:0 5px 0 0"></div>
<div class="a" style="left:377px;top:643.5px;width:121.5px;height:23px;background:linear-gradient(#f1f3f9,#e3e7f2 50%,#d3d9ea);border:1px solid #5d6787;border-bottom:none;border-right-color:#9aa3bf;border-radius:0 5px 0 0"></div>
<div class="a" style="left:499.5px;top:643.5px;width:146.0px;height:23px;background:linear-gradient(#f1f3f9,#e3e7f2 50%,#d3d9ea);border:1px solid #5d6787;border-bottom:none;border-right-color:#9aa3bf;border-radius:0 5px 0 0"></div>
<div class="a" style="left:646.3px;top:643.5px;width:253.70000000000005px;height:23px;background:linear-gradient(#f1f3f9,#e3e7f2 50%,#d3d9ea);border:1px solid #5d6787;border-bottom:none;border-right-color:#9aa3bf;border-radius:0 5px 0 0"></div>
<div class="t" style="left:287px;top:646.29px;font-size:13.6px;line-height:16px;color:#1f1f1f;">Sicherungen</div>
<div class="t" style="left:391.3px;top:646.29px;font-size:13.6px;line-height:16px;color:#1f1f1f;">Sicherungsplan</div>
<div class="t" style="left:513.4px;top:645.68px;font-size:13.9px;line-height:17px;color:#1f1f1f;">Funktionsfreigaben</div>
<div class="t" style="left:659.7px;top:645.68px;font-size:13.9px;line-height:17px;color:#1f1f1f;">Standard Bereichsfreigaben</div>
<div class="a" style="left:272px;top:666px;width:1784px;height:40px;background:linear-gradient(#ccd2e6,#bcc3db 40%,#a9b1cd 75%,#a3acc9);border-top:1px solid #b6bdd4"></div>
<svg class="a" style="left:278px;top:672px;" width="30" height="29" viewBox="0 0 30 29"><g opacity="0.42"><rect x="1.5" y="1.5" width="15" height="22" rx="2" fill="#eef0f6" stroke="#4a5070" stroke-width="1.3"/><path d="M4 6h10M4 9.5h10M4 13h7M4 16.5h10M4 20h8" stroke="#4a5070" stroke-width="1.3"/><path d="M19 11a7 7 0 1 1-5 9" stroke="#4a6ad0" stroke-width="3" fill="none"/><path d="M16 9l5 1.5-3.5 3.5z" fill="#4a6ad0"/></g></svg>
<svg class="a" style="left:315px;top:672px;" width="30" height="29" viewBox="0 0 30 29"><g opacity="0.45"><rect x="1" y="1" width="20" height="19" rx="2" fill="#6f8ad4" stroke="#3a4a80" stroke-width="1.2"/><rect x="4" y="2" width="14" height="7" fill="#eef0f6"/><rect x="4" y="13" width="14" height="6" fill="#eef0f6"/><rect x="13" y="11" width="12" height="16" rx="2" fill="#f2f2f6" stroke="#555" stroke-width="1.1"/><circle cx="19" cy="18" r="3.6" fill="none" stroke="#555" stroke-width="1.2"/></g></svg>
<svg class="a" style="left:352px;top:673px;" width="27" height="27" viewBox="0 0 27 27"><path d="M4 4L22 22M22 4L4 22" stroke="#b5685a" stroke-width="5.5" stroke-linecap="round" opacity="0.55"/></svg>
<div class="a" style="left:272px;top:706px;width:1784px;height:27px;background:linear-gradient(#f1f3fb,#e4e7f4 45%,#d9ddee 60%,#e8ebf7)"></div>
<div class="a" style="left:272px;top:732px;width:1784px;height:2px;background:#a9b1cb"></div>
<div class="a" style="left:495px;top:707px;width:1px;height:25px;background:#aab2cc"></div>
<div class="a" style="left:717px;top:707px;width:1px;height:25px;background:#aab2cc"></div>
<div class="a" style="left:939px;top:707px;width:1px;height:25px;background:#aab2cc"></div>
<div class="a" style="left:1162px;top:707px;width:1px;height:25px;background:#aab2cc"></div>
<div class="a" style="left:1385px;top:707px;width:1px;height:25px;background:#aab2cc"></div>
<div class="a" style="left:1608px;top:707px;width:1px;height:25px;background:#aab2cc"></div>
<div class="a" style="left:1831px;top:707px;width:1px;height:25px;background:#aab2cc"></div>
<div class="a" style="left:2055px;top:707px;width:1px;height:25px;background:#aab2cc"></div>
<div class="t" style="left:276.3px;top:712.65px;font-size:14px;line-height:17px;color:#1f1f1f;">Backup Name</div>
<div class="t" style="left:500.0px;top:712.65px;font-size:14px;line-height:17px;color:#1f1f1f;">Erstellt am</div>
<div class="t" style="left:722.5px;top:712.65px;font-size:14px;line-height:17px;color:#1f1f1f;">Erstellt von</div>
<div class="t" style="left:944.5px;top:712.65px;font-size:14px;line-height:17px;color:#1f1f1f;">Beschreibung</div>
<div class="t" style="left:1167.6000000000001px;top:712.65px;font-size:14px;line-height:17px;color:#1f1f1f;">SQL-Version</div>
<div class="t" style="left:1390.6000000000001px;top:712.65px;font-size:14px;line-height:17px;color:#1f1f1f;">DB-Version</div>
<div class="t" style="left:1612.9px;top:712.65px;font-size:14px;line-height:17px;color:#1f1f1f;">Typ</div>
<div class="t" style="left:1836.0px;top:712.65px;font-size:14px;line-height:17px;color:#1f1f1f;">Größe (MB)</div>
<svg class="a" style="left:478px;top:716px;" width="14" height="8" viewBox="0 0 14 8"><path d="M0.5 7.5L7 0.8l6.5 6.7z" fill="#111"/></svg>
<div class="a" style="left:272px;top:734px;width:1784px;height:195px;background:#fbfbfd"></div>
<div class="a" style="left:272px;top:757px;width:1784px;height:1px;background:#e6e9f1"></div>
<div class="a" style="left:272px;top:780px;width:1784px;height:1px;background:#e6e9f1"></div>
<div class="a" style="left:272px;top:804px;width:1784px;height:1px;background:#e6e9f1"></div>
<div class="a" style="left:272px;top:827px;width:1784px;height:1px;background:#e6e9f1"></div>
<div class="a" style="left:272px;top:851px;width:1784px;height:1px;background:#e6e9f1"></div>
<div class="a" style="left:272px;top:875px;width:1784px;height:1px;background:#e6e9f1"></div>
<div class="a" style="left:272px;top:898px;width:1784px;height:1px;background:#e6e9f1"></div>
<div class="a" style="left:272px;top:922px;width:1784px;height:1px;background:#e6e9f1"></div>
<div class="a" style="left:272px;top:945px;width:1784px;height:1px;background:#e6e9f1"></div>
<div class="a" style="left:495px;top:734px;width:1px;height:195px;background:#e4e7ef"></div>
<div class="a" style="left:717px;top:734px;width:1px;height:195px;background:#e4e7ef"></div>
<div class="a" style="left:939px;top:734px;width:1px;height:195px;background:#e4e7ef"></div>
<div class="a" style="left:1162px;top:734px;width:1px;height:195px;background:#e4e7ef"></div>
<div class="a" style="left:1385px;top:734px;width:1px;height:195px;background:#e4e7ef"></div>
<div class="a" style="left:1608px;top:734px;width:1px;height:195px;background:#e4e7ef"></div>
<div class="a" style="left:1831px;top:734px;width:1px;height:195px;background:#e4e7ef"></div>
<div class="a" style="left:2055px;top:734px;width:1px;height:195px;background:#e4e7ef"></div>
<div class="t" style="left:384px;top:738.25px;font-size:14px;line-height:17px;color:#1f1f1f;letter-spacing:-0.6px;">OC</div>
<div class="t" style="left:500px;top:738.99px;font-size:13.3px;line-height:16px;color:#1f1f1f;letter-spacing:-0.15px;">19.12.2023 07:44:01</div>
<div class="t" style="left:722.5px;top:738.25px;font-size:14px;line-height:17px;color:#1f1f1f;">Benutzer</div>
<div class="t" style="left:1167px;top:738.25px;font-size:14px;line-height:17px;color:#1f1f1f;letter-spacing:-0.1px;">SQL Server 2017</div>
<div class="t" style="left:1390.5px;top:738.99px;font-size:13.3px;line-height:16px;color:#1f1f1f;">250.36.0.0</div>
<div class="t" style="left:1613px;top:738.25px;font-size:14px;line-height:17px;color:#1f1f1f;">Standard</div>
<div class="t" style="left:1929px;width:120px;text-align:right;top:738.99px;font-size:13.3px;line-height:16px;color:#1f1f1f;">4.306,13</div>
<div class="t" style="left:384px;top:761.85px;font-size:14px;line-height:17px;color:#1f1f1f;letter-spacing:-0.6px;">OC</div>
<div class="t" style="left:500px;top:762.59px;font-size:13.3px;line-height:16px;color:#1f1f1f;letter-spacing:-0.15px;">06.02.2024 07:23:08</div>
<div class="t" style="left:722.5px;top:761.85px;font-size:14px;line-height:17px;color:#1f1f1f;">Systemsicherung</div>
<div class="t" style="left:1167px;top:761.85px;font-size:14px;line-height:17px;color:#1f1f1f;letter-spacing:-0.1px;">SQL Server 2017</div>
<div class="t" style="left:1390.5px;top:762.59px;font-size:13.3px;line-height:16px;color:#1f1f1f;">250.36.0.0</div>
<div class="t" style="left:1613px;top:761.85px;font-size:14px;line-height:17px;color:#1f1f1f;">Standard</div>
<div class="t" style="left:1929px;width:120px;text-align:right;top:762.59px;font-size:13.3px;line-height:16px;color:#1f1f1f;">3.980,11</div>
<div class="t" style="left:384px;top:785.45px;font-size:14px;line-height:17px;color:#1f1f1f;letter-spacing:-0.6px;">OC</div>
<div class="t" style="left:500px;top:786.19px;font-size:13.3px;line-height:16px;color:#1f1f1f;letter-spacing:-0.15px;">07.02.2024 15:29:18</div>
<div class="t" style="left:722.5px;top:785.45px;font-size:14px;line-height:17px;color:#1f1f1f;">Benutzer</div>
<div class="t" style="left:944.6px;top:785.45px;font-size:14px;line-height:17px;color:#1f1f1f;">Sicherung für Kopie der Datenb...</div>
<div class="t" style="left:1167px;top:785.45px;font-size:14px;line-height:17px;color:#1f1f1f;letter-spacing:-0.1px;">SQL Server 2017</div>
<div class="t" style="left:1390.5px;top:786.19px;font-size:13.3px;line-height:16px;color:#1f1f1f;">250.36.0.0</div>
<div class="t" style="left:1613px;top:785.45px;font-size:14px;line-height:17px;color:#1f1f1f;">Standard</div>
<div class="t" style="left:1929px;width:120px;text-align:right;top:786.19px;font-size:13.3px;line-height:16px;color:#1f1f1f;">3.928,11</div>
<div class="t" style="left:384px;top:809.05px;font-size:14px;line-height:17px;color:#1f1f1f;letter-spacing:-0.6px;">OC</div>
<div class="t" style="left:500px;top:809.79px;font-size:13.3px;line-height:16px;color:#1f1f1f;letter-spacing:-0.15px;">08.02.2024 15:39:54</div>
<div class="t" style="left:722.5px;top:809.05px;font-size:14px;line-height:17px;color:#1f1f1f;">Benutzer</div>
<div class="t" style="left:944.6px;top:809.05px;font-size:14px;line-height:17px;color:#1f1f1f;">Sicherung</div>
<div class="t" style="left:1167px;top:809.05px;font-size:14px;line-height:17px;color:#1f1f1f;letter-spacing:-0.1px;">SQL Server 2017</div>
<div class="t" style="left:1390.5px;top:809.79px;font-size:13.3px;line-height:16px;color:#1f1f1f;">250.36.0.0</div>
<div class="t" style="left:1613px;top:809.05px;font-size:14px;line-height:17px;color:#1f1f1f;">Standard</div>
<div class="t" style="left:1929px;width:120px;text-align:right;top:809.79px;font-size:13.3px;line-height:16px;color:#1f1f1f;">3.928,11</div>
<div class="t" style="left:384px;top:832.65px;font-size:14px;line-height:17px;color:#1f1f1f;letter-spacing:-0.6px;">OC</div>
<div class="t" style="left:500px;top:833.39px;font-size:13.3px;line-height:16px;color:#1f1f1f;letter-spacing:-0.15px;">09.02.2024 00:00:45</div>
<div class="t" style="left:722.5px;top:832.65px;font-size:14px;line-height:17px;color:#1f1f1f;">Systemsicherung</div>
<div class="t" style="left:1167px;top:832.65px;font-size:14px;line-height:17px;color:#1f1f1f;letter-spacing:-0.1px;">SQL Server 2017</div>
<div class="t" style="left:1390.5px;top:833.39px;font-size:13.3px;line-height:16px;color:#1f1f1f;">250.36.0.0</div>
<div class="t" style="left:1613px;top:832.65px;font-size:14px;line-height:17px;color:#1f1f1f;">Standard</div>
<div class="t" style="left:1929px;width:120px;text-align:right;top:833.39px;font-size:13.3px;line-height:16px;color:#1f1f1f;">3.928,11</div>
<div class="t" style="left:384px;top:856.25px;font-size:14px;line-height:17px;color:#1f1f1f;letter-spacing:-0.6px;">OC</div>
<div class="t" style="left:500px;top:856.99px;font-size:13.3px;line-height:16px;color:#1f1f1f;letter-spacing:-0.15px;">09.02.2024 10:46:49</div>
<div class="t" style="left:722.5px;top:856.25px;font-size:14px;line-height:17px;color:#1f1f1f;">Systemsicherung</div>
<div class="t" style="left:1167px;top:856.25px;font-size:14px;line-height:17px;color:#1f1f1f;letter-spacing:-0.1px;">SQL Server 2017</div>
<div class="t" style="left:1390.5px;top:856.99px;font-size:13.3px;line-height:16px;color:#1f1f1f;">250.36.0.0</div>
<div class="t" style="left:1613px;top:856.25px;font-size:14px;line-height:17px;color:#1f1f1f;">Standard</div>
<div class="t" style="left:1929px;width:120px;text-align:right;top:856.99px;font-size:13.3px;line-height:16px;color:#1f1f1f;">3.938,11</div>
<div class="t" style="left:384px;top:879.85px;font-size:14px;line-height:17px;color:#1f1f1f;letter-spacing:-0.6px;">OC</div>
<div class="t" style="left:500px;top:880.59px;font-size:13.3px;line-height:16px;color:#1f1f1f;letter-spacing:-0.15px;">10.02.2024 00:01:04</div>
<div class="t" style="left:722.5px;top:879.85px;font-size:14px;line-height:17px;color:#1f1f1f;">Systemsicherung</div>
<div class="t" style="left:1167px;top:879.85px;font-size:14px;line-height:17px;color:#1f1f1f;letter-spacing:-0.1px;">SQL Server 2017</div>
<div class="t" style="left:1390.5px;top:880.59px;font-size:13.3px;line-height:16px;color:#1f1f1f;">250.36.0.0</div>
<div class="t" style="left:1613px;top:879.85px;font-size:14px;line-height:17px;color:#1f1f1f;">Standard</div>
<div class="t" style="left:1929px;width:120px;text-align:right;top:880.59px;font-size:13.3px;line-height:16px;color:#1f1f1f;">3.937,11</div>
<div class="t" style="left:384px;top:903.45px;font-size:14px;line-height:17px;color:#1f1f1f;letter-spacing:-0.6px;">OC</div>
<div class="t" style="left:500px;top:904.19px;font-size:13.3px;line-height:16px;color:#1f1f1f;letter-spacing:-0.15px;">11.02.2024 00:01:17</div>
<div class="t" style="left:722.5px;top:903.45px;font-size:14px;line-height:17px;color:#1f1f1f;">Systemsicherung</div>
<div class="t" style="left:1167px;top:903.45px;font-size:14px;line-height:17px;color:#1f1f1f;letter-spacing:-0.1px;">SQL Server 2017</div>
<div class="t" style="left:1390.5px;top:904.19px;font-size:13.3px;line-height:16px;color:#1f1f1f;">250.36.0.0</div>
<div class="t" style="left:1613px;top:903.45px;font-size:14px;line-height:17px;color:#1f1f1f;">Standard</div>
<div class="t" style="left:1929px;width:120px;text-align:right;top:904.19px;font-size:13.3px;line-height:16px;color:#1f1f1f;">3.938,11</div>
<div class="t" style="left:384px;top:927.05px;font-size:14px;line-height:17px;color:#1f1f1f;letter-spacing:-0.6px;">OC</div>
<div class="t" style="left:722.5px;top:927.05px;font-size:14px;line-height:17px;color:#1f1f1f;">Systemsicherung</div>
<div class="t" style="left:1167px;top:927.05px;font-size:14px;line-height:17px;color:#1f1f1f;letter-spacing:-0.1px;">SQL Server 2017</div>
<div class="t" style="left:1390.5px;top:927.79px;font-size:13.3px;line-height:16px;color:#1f1f1f;">250.36.0.0</div>
<div class="t" style="left:1613px;top:927.05px;font-size:14px;line-height:17px;color:#1f1f1f;">Standard</div>
<div class="t" style="left:836px;top:785.45px;font-size:14px;line-height:17px;color:#1f1f1f;">r&#x27;</div>
<div class="t" style="left:841px;top:809.05px;font-size:14px;line-height:17px;color:#1f1f1f;">&#x27;</div>
<svg class="a" style="left:255px;top:720.5px;" width="140" height="215" viewBox="0 0 140 215"><path d="M28 27C40 22 60 22 70 27" stroke="#000" stroke-width="40" stroke-linecap="round" fill="none"/>
<path d="M45 48V177" stroke="#000" stroke-width="53" stroke-linecap="round" fill="none"/>
<path d="M98 40V180" stroke="#000" stroke-width="58" stroke-linecap="round" fill="none"/></svg>
<svg class="a" style="left:765px;top:780px;" width="90" height="55" viewBox="0 0 90 55"><path d="M21 14.5C40 13 55 13 62.5 16" stroke="#000" stroke-width="19" stroke-linecap="round" fill="none"/><path d="M18 38C40 39 60 40 70 39" stroke="#000" stroke-width="19" stroke-linecap="round" fill="none"/></svg>
<div class="a" style="left:774px;top:381px;width:545px;height:381px;background:#fbfbfb;border:1px solid #6a6a6a;box-shadow:inset 0 0 0 1px #c8c8c8"></div>
<svg class="a" style="left:783px;top:389px;" width="18" height="18" viewBox="0 0 18 18"><circle cx="9" cy="9" r="7.6" fill="#f4f6ee" stroke="#7aa83c" stroke-width="2.2"/><path d="M4 9.5h3M9 6.5h5.5M9 9.5h6M9 12.5h5" stroke="#8fbf50" stroke-width="1.3"/></svg>
<div class="t" style="left:805.8px;top:390.73px;font-size:12.9px;line-height:15px;color:#1f1f1f;letter-spacing:0.0px;">Zeitlinienkonfiguration der Datenbasis</div>
<svg class="a" style="left:1015px;top:382px;" width="125" height="30" viewBox="0 0 125 30"><path d="M13 14.5C40 12 80 12 110 14" stroke="#000" stroke-width="19" stroke-linecap="round" fill="none"/></svg>
<div class="t" style="left:1133px;top:390.73px;font-size:12.9px;line-height:15px;color:#1f1f1f;">C&#x27; bearbeiten</div>
<svg class="a" style="left:1295px;top:391px;" width="14" height="14" viewBox="0 0 14 14"><path d="M1 1L13 13M13 1L1 13" stroke="#333" stroke-width="1.3"/></svg>
<div class="a" style="left:783.7px;top:423.3px;width:526px;height:286.5px;border:1px solid #a6aec6;background:#fbfbfc"></div>
<div class="t" style="left:798.5px;top:439.65px;font-size:14px;line-height:17px;color:#1f1f1f;">Zeitbereichsauswahl:</div>
<div class="a" style="left:970.5px;top:435.6px;width:329px;height:25.69999999999999px;border:1px solid #a4adc6;border-radius:3px;background:linear-gradient(#f5f6fa,#e9ecf3 45%,#dde1ec 55%,#e7eaf3)"></div>
<div class="t" style="left:975.4px;top:440.10px;font-size:14px;line-height:17px;color:#1f1f1f;">Keine Änderung des Zeitbereichs</div>
<svg class="a" style="left:1287.5px;top:445.95000000000005px;" width="8" height="5" viewBox="0 0 8 5"><path d="M0.5 0.5h7L4 4.5z" fill="#111"/></svg>
<div class="t" style="left:798.5px;top:476.55px;font-size:14px;line-height:17px;color:#1f1f1f;">Startdatum:</div>
<div class="t" style="left:970.4px;top:477.19px;font-size:13.6px;line-height:16px;color:#1f1f1f;letter-spacing:-0.1px;">01.01.2017</div>
<div class="a" style="left:1192.7px;top:472px;width:106.79999999999995px;height:24.100000000000023px;border:1px solid #b6bdd3;background:#fdfdfd"></div>
<div class="a" style="left:1282px;top:473px;width:16.5px;height:11.550000000000011px;background:linear-gradient(#f4f5f9,#e0e4ee);border-left:1px solid #b6bdd3;border-bottom:1px solid #b6bdd3"></div>
<div class="a" style="left:1282px;top:484.05px;width:16.5px;height:11.050000000000011px;background:linear-gradient(#f4f5f9,#e0e4ee);border-left:1px solid #b6bdd3"></div>
<svg class="a" style="left:1285px;top:474px;" width="11" height="9" viewBox="0 0 11 9"><path d="M5.5 1.5v6M2.5 4.5h6" stroke="#b4b4b4" stroke-width="1"/></svg>
<svg class="a" style="left:1285px;top:486.05px;" width="11" height="8" viewBox="0 0 11 8"><path d="M3.5 4.5h4" stroke="#a6a6a6" stroke-width="1"/></svg>
<div class="t" style="left:1197.2px;top:476.57px;font-size:13.5px;line-height:16px;color:#a0a0a0;">0</div>
<div class="t" style="left:798.5px;top:508.35px;font-size:14px;line-height:17px;color:#1f1f1f;">Enddatum:</div>
<div class="t" style="left:970.4px;top:508.99px;font-size:13.6px;line-height:16px;color:#1f1f1f;letter-spacing:-0.1px;">31.12.2024</div>
<div class="a" style="left:1192.7px;top:507.6px;width:106.79999999999995px;height:22.899999999999977px;border:1px solid #b6bdd3;background:#fdfdfd"></div>
<div class="a" style="left:1282px;top:508.6px;width:16.5px;height:10.949999999999932px;background:linear-gradient(#f4f5f9,#e0e4ee);border-left:1px solid #b6bdd3;border-bottom:1px solid #b6bdd3"></div>
<div class="a" style="left:1282px;top:519.05px;width:16.5px;height:10.450000000000045px;background:linear-gradient(#f4f5f9,#e0e4ee);border-left:1px solid #b6bdd3"></div>
<svg class="a" style="left:1285px;top:509.6px;" width="11" height="9" viewBox="0 0 11 9"><path d="M5.5 1.5v6M2.5 4.5h6" stroke="#b4b4b4" stroke-width="1"/></svg>
<svg class="a" style="left:1285px;top:521.05px;" width="11" height="8" viewBox="0 0 11 8"><path d="M3.5 4.5h4" stroke="#a6a6a6" stroke-width="1"/></svg>
<div class="t" style="left:1197.2px;top:511.57px;font-size:13.5px;line-height:16px;color:#a0a0a0;">0</div>
<div class="t" style="left:798.7px;top:540.05px;font-size:14px;line-height:17px;color:#1f1f1f;">Anzahl Jahre:</div>
<div class="t" style="left:970.9px;top:540.69px;font-size:13.6px;line-height:16px;color:#1f1f1f;">8</div>
<div class="t" style="left:798.7px;top:585.25px;font-size:14px;line-height:17px;color:#1f1f1f;letter-spacing:-0.1px;">Geschäftsjahresbeginn:</div>
<div class="a" style="left:970.5px;top:580.6px;width:329px;height:26.199999999999932px;border:1px solid #a4adc6;border-radius:3px;background:linear-gradient(#f5f6fa,#e9ecf3 45%,#dde1ec 55%,#e7eaf3)"></div>
<div class="t" style="left:975.4px;top:585.35px;font-size:14px;line-height:17px;color:#1f1f1f;">Januar</div>
<svg class="a" style="left:1287.5px;top:591.2px;" width="8" height="5" viewBox="0 0 8 5"><path d="M0.5 0.5h7L4 4.5z" fill="#111"/></svg>
<div class="t" style="left:798.7px;top:622.55px;font-size:14px;line-height:17px;color:#1f1f1f;">Basiszeitschritt:</div>
<div class="a" style="left:970.5px;top:618.4px;width:329px;height:25.800000000000068px;border:1px solid #a4adc6;border-radius:3px;background:linear-gradient(#f5f6fa,#e9ecf3 45%,#dde1ec 55%,#e7eaf3)"></div>
<div class="t" style="left:975.4px;top:622.95px;font-size:14px;line-height:17px;color:#1f1f1f;">Monat</div>
<svg class="a" style="left:1287.5px;top:628.8px;" width="8" height="5" viewBox="0 0 8 5"><path d="M0.5 0.5h7L4 4.5z" fill="#111"/></svg>
<div class="t" style="left:798.7px;top:659.35px;font-size:14px;line-height:17px;color:#8c8c8c;">Perioden pro Jahr:</div>
<div class="a" style="left:970.5px;top:655.7px;width:329.0px;height:23.199999999999932px;border:1px solid #b6bdd3;background:#fdfdfd"></div>
<div class="a" style="left:1282px;top:656.7px;width:16.5px;height:11.099999999999909px;background:linear-gradient(#f4f5f9,#e0e4ee);border-left:1px solid #b6bdd3;border-bottom:1px solid #b6bdd3"></div>
<div class="a" style="left:1282px;top:667.3px;width:16.5px;height:10.600000000000023px;background:linear-gradient(#f4f5f9,#e0e4ee);border-left:1px solid #b6bdd3"></div>
<svg class="a" style="left:1285px;top:657.7px;" width="11" height="9" viewBox="0 0 11 9"><path d="M5.5 1.5v6M2.5 4.5h6" stroke="#b4b4b4" stroke-width="1"/></svg>
<svg class="a" style="left:1285px;top:669.3px;" width="11" height="8" viewBox="0 0 11 8"><path d="M3.5 4.5h4" stroke="#a6a6a6" stroke-width="1"/></svg>
<div class="t" style="left:975.0px;top:659.82px;font-size:13.5px;line-height:16px;color:#a8a8a8;">12</div>
<div class="a" style="left:775px;top:716.5px;width:543px;height:44.5px;background:#e7eaf4;border-top:1px solid #b2b9cd"></div>
<div class="a" style="left:1084.3px;top:727.2px;width:106.29999999999995px;height:26.2px;border:1px solid #9ca5bf;border-radius:3px;background:linear-gradient(#f7f8fb,#eceef4 45%,#dde1ec 60%,#e6e9f2)"></div>
<div class="t" style="left:1129px;top:732.25px;font-size:14px;line-height:17px;color:#1f1f1f;">OK</div>
<div class="a" style="left:1202.2px;top:727.2px;width:107.20000000000005px;height:26.2px;border:1px solid #9ca5bf;border-radius:3px;background:linear-gradient(#f7f8fb,#eceef4 45%,#dde1ec 60%,#e6e9f2)"></div>
<div class="t" style="left:1222px;top:732.25px;font-size:14px;line-height:17px;color:#1f1f1f;">Abbrechen</div></div>
</body></html>
